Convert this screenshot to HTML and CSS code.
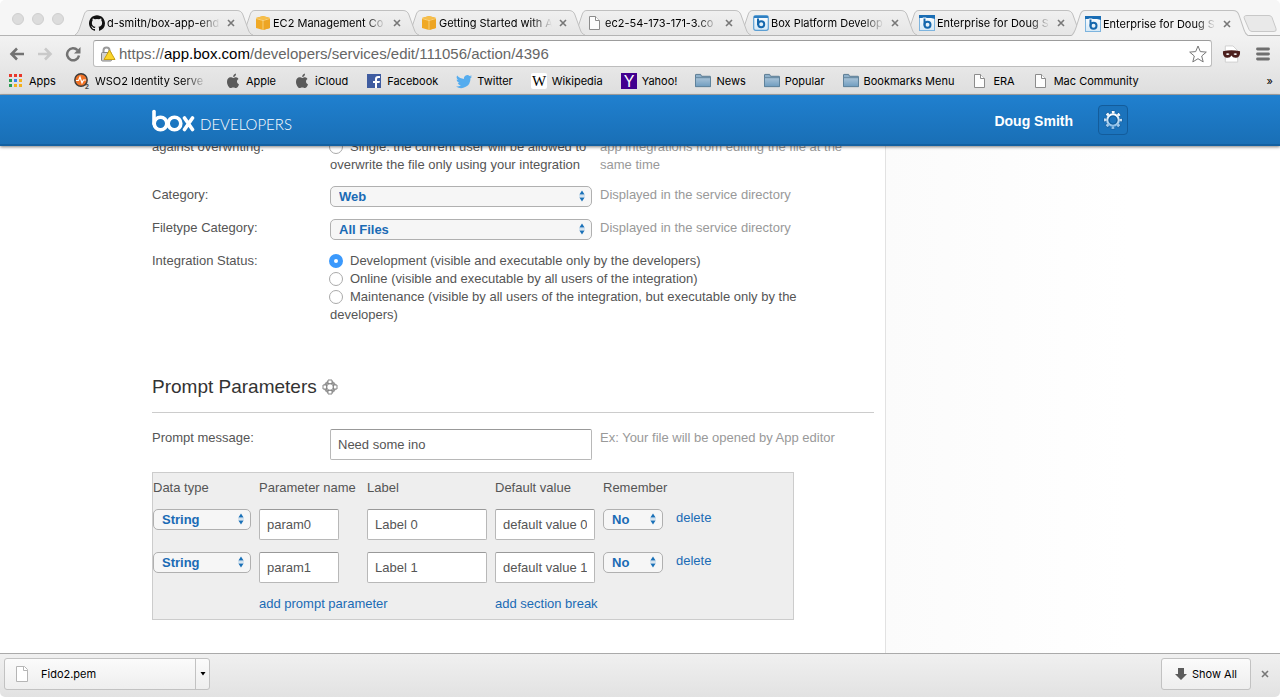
FILE: index.html
```
<!DOCTYPE html>
<html lang="en">
<head>
<meta charset="utf-8">
<title>Enterprise for Doug Smith</title>
<link rel="stylesheet" href="styles.css">
</head>
<body>
<svg class="sprites" aria-hidden="true">
  <defs>
    <linearGradient id="tab-fill" x1="0" y1="0" x2="0" y2="1"><stop offset="0" stop-color="#f0f0f0"/><stop offset="1" stop-color="#e6e6e6"/></linearGradient>
    <linearGradient id="folder-fill" x1="0" y1="0" x2="0" y2="1"><stop offset="0" stop-color="#a9c3d8"/><stop offset="1" stop-color="#6f9cbf"/></linearGradient>
    <linearGradient id="box-fill" x1="0" y1="0" x2="0" y2="1"><stop offset="0" stop-color="#fff"/><stop offset="1" stop-color="#d4e8f6"/></linearGradient>
    <linearGradient id="gear-fill" x1="0" y1="0" x2="0" y2="1"><stop offset="0" stop-color="#fff"/><stop offset="1" stop-color="#8fc0e8"/></linearGradient>
  </defs>
  <symbol id="tab-shape" viewBox="0 0 178 25" preserveAspectRatio="none">
    <path d="M0 25 C3 23 4 20 5 17 L9 5 C10 2 11 .5 14 .5 H162 C165 .5 167 2 168 5 L173 19 C174 22 175 24 178 25Z" fill="url(#tab-fill)"/>
    <path d="M0 25 C3 23 4 20 5 17 L9 5 C10 2 11 .5 14 .5 H162 C165 .5 167 2 168 5 L173 19 C174 22 175 24 178 25" fill="none" stroke="#c0c0c0"/>
  </symbol>
  <symbol id="tab-shape-active" viewBox="0 0 178 25" preserveAspectRatio="none">
    <path d="M0 25 C3 23 4 20 5 17 L9 5 C10 2 11 .5 14 .5 H162 C165 .5 167 2 168 5 L173 19 C174 22 175 24 178 25Z" fill="#f2f2f2"/>
    <path d="M0 25 C3 23 4 20 5 17 L9 5 C10 2 11 .5 14 .5 H162 C165 .5 167 2 168 5 L173 19 C174 22 175 24 178 25" fill="none" stroke="#c0c0c0"/>
  </symbol>
  <symbol id="github" viewBox="0 0 16 16">
    <path fill="#111" d="M8 .2C3.6.2 0 3.8 0 8.200c0 3.500 2.300 6.500 5.500 7.600.4.100.5-.2.5-.4v-1.400c-2.200.5-2.700-1-2.700-1-.4-.9-.9-1.200-.9-1.200-.7-.5.1-.5.1-.5.800.1 1.200.8 1.200.8.7 1.200 1.900.9 2.300.7.100-.5.3-.9.500-1.100C4.700 11.500 2.900 10.800 2.900 7.700c0-.9.3-1.600.8-2.100-.1-.2-.4-1 .1-2.100 0 0 .7-.2 2.200.8a7.500 7.500 0 0 1 4 0c1.500-1 2.200-.8 2.200-.8.4 1.100.2 1.900.1 2.100.5.600.8 1.300.8 2.100 0 3.100-1.900 3.800-3.700 4 .3.200.6.700.6 1.500v2.200c0 .2.100.5.600.4A8 8 0 0 0 16 8.200C16 3.800 12.400.2 8 .2z"/>
  </symbol>
  <symbol id="aws" viewBox="0 0 16 16">
    <path fill="#f0a925" d="M1 3l7-2 7 2v10l-7 2-7-2z"/><path fill="#f6be4a" d="M1 3l7-2 7 2-7 2z"/><path fill="#eda524" d="M8 5l7-2v10l-7 2z"/><path stroke="#fbdf9c" stroke-width=".7" fill="none" d="M8 5v10M1 3.500l7 2 7-2"/>
  </symbol>
  <symbol id="page" viewBox="0 0 16 16">
    <path fill="#fdfdfd" stroke="#8c8c8c" d="M2.500 1.500h6l4 4v9h-10z"/><path fill="#fff" stroke="#8c8c8c" d="M8.500 1.500v4h4"/>
  </symbol>
  <symbol id="box-icon" viewBox="0 0 16 16">
    <rect x=".5" y=".5" width="15" height="15" fill="url(#box-fill)" stroke="#7db4de"/><path d="M0 0h16v4l-4-1H0z" fill="#1a6db4"/><path d="M5.500 2.500v7.500" stroke="#fff" stroke-width="3.600"/><path d="M5.500 3.500v7" stroke="#1668ad" stroke-width="2"/><circle cx="8.500" cy="9.800" r="3" fill="none" stroke="#1668ad" stroke-width="2"/>
  </symbol>
  <symbol id="box-icon-plain" viewBox="0 0 16 16">
    <rect x=".7" y=".7" width="14.600" height="14.600" rx="2" fill="url(#box-fill)" stroke="#5c9fd3" stroke-width="1.200"/><path d="M1 1h14v2H1z" fill="#2e7fc2"/><path d="M5 3.500v6.500" stroke="#1668ad" stroke-width="2"/><circle cx="8.200" cy="9.200" r="3" fill="none" stroke="#1668ad" stroke-width="2"/>
  </symbol>
  <symbol id="close" viewBox="0 0 10 10"><path d="M2 2l6 6M8 2l-6 6" stroke="#777" stroke-width="1.600" fill="none"/></symbol>
  <symbol id="apple" viewBox="0 0 16 16">
    <path fill="#5a5a5a" d="M11.200 4.200c-1.300 0-1.900.7-2.800.7s-1.700-.7-2.900-.7C3.700 4.200 2 5.800 2 8.700c0 3 2 6.300 3.600 6.300 1 0 1.400-.6 2.700-.6s1.600.6 2.600.6c1.300 0 2.500-1.900 3.100-3.600-1.200-.5-2-1.500-2-2.800 0-1.100.6-2 1.500-2.600-.6-1.100-1.400-1.800-2.300-1.800zM8.200 4.100C8 2.300 9.300.8 11 .5c.2 1.800-1.100 3.500-2.800 3.600z"/>
  </symbol>
  <symbol id="folder" viewBox="0 0 17 16">
    <path fill="#8fb1cb" stroke="#56788f" d="M.5 13.500v-12q0-.5.500-.5h5l1 2h9q.5 0 .5.500v10z"/><path fill="url(#folder-fill)" stroke="#5e819a" d="M.5 4.500h16v9.500H.5z"/>
  </symbol>
  <symbol id="arrows" viewBox="0 0 8 12">
    <path fill="#1a71b8" d="M4 .5l2.600 4H1.400zM4 11.500l2.600-4H1.400z"/><path d="M1 5.500h6M1 6.700h6" stroke="#a9cae6" stroke-width=".5"/>
  </symbol>
</svg>

<div class="window">
  <nav class="tabs" aria-label="Tabs">
    <div class="lights"><span class="light"></span><span class="light"></span><span class="light"></span></div>
    <div class="tab t1"><svg class="shape"><use href="#tab-shape"/></svg><svg class="icon"><use href="#github"/></svg><span class="title">d-smith/box-app-end</span><button class="close" aria-label="Close tab"><svg><use href="#close"/></svg></button></div>
    <div class="tab t2"><svg class="shape"><use href="#tab-shape"/></svg><svg class="icon"><use href="#aws"/></svg><span class="title">EC2 Management Co</span><button class="close" aria-label="Close tab"><svg><use href="#close"/></svg></button></div>
    <div class="tab t3"><svg class="shape"><use href="#tab-shape"/></svg><svg class="icon"><use href="#aws"/></svg><span class="title">Getting Started with A</span><button class="close" aria-label="Close tab"><svg><use href="#close"/></svg></button></div>
    <div class="tab t4"><svg class="shape"><use href="#tab-shape"/></svg><svg class="icon"><use href="#page"/></svg><span class="title">ec2-54-173-171-3.co</span><button class="close" aria-label="Close tab"><svg><use href="#close"/></svg></button></div>
    <div class="tab t5"><svg class="shape"><use href="#tab-shape"/></svg><svg class="icon"><use href="#box-icon-plain"/></svg><span class="title">Box Platform Develop</span><button class="close" aria-label="Close tab"><svg><use href="#close"/></svg></button></div>
    <div class="tab t6"><svg class="shape"><use href="#tab-shape"/></svg><svg class="icon"><use href="#box-icon"/></svg><span class="title">Enterprise for Doug S</span><button class="close" aria-label="Close tab"><svg><use href="#close"/></svg></button></div>
    <div class="tab active"><svg class="shape"><use href="#tab-shape-active"/></svg><svg class="icon"><use href="#box-icon"/></svg><span class="title">Enterprise for Doug S</span><button class="close" aria-label="Close tab"><svg><use href="#close"/></svg></button></div>
    <button class="new-tab" aria-label="New tab"><svg viewBox="0 0 34 17"><path d="M4 .5h22q2 0 3 2l4 11q1 3-2 3H9q-2 0-3-2L1.500 4Q0 .5 4 .5z" fill="#e9e9e9" stroke="#c8c8c8"/></svg></button>
  </nav>

  <div class="chrome">
    <div class="toolbar">
      <button class="nav" aria-label="Back"><svg viewBox="0 0 16 16"><path d="M8 2.500L2.500 8 8 13.500M3 8h12" fill="none" stroke="#737373" stroke-width="2.600"/></svg></button>
      <button class="nav" aria-label="Forward"><svg viewBox="0 0 16 16"><path d="M8 2.500L13.500 8 8 13.500M13 8H1" fill="none" stroke="#c9c9c9" stroke-width="2.600"/></svg></button>
      <button class="nav" aria-label="Reload"><svg viewBox="0 0 16 16"><path d="M12.500 4.200A6 6 0 1 0 14 9.500" fill="none" stroke="#737373" stroke-width="2.500"/><path d="M15.500 1v6.500H9z" fill="#737373"/></svg></button>
      <div class="address">
        <svg class="lock" viewBox="0 0 16 16"><path d="M3.500 7V4.500a3 3 0 0 1 6 0V7" fill="none" stroke="#9a9a9a" stroke-width="2"/><rect x="1.500" y="6.500" width="10" height="8.500" rx="1" fill="#d2d2d2" stroke="#858585"/><path d="M9.500 4l5.500 9.500H4z" fill="#fbd52a" stroke="#caa10e" stroke-linejoin="round"/></svg>
        <span class="url">https://<span class="host">app.box.com</span>/developers/services/edit/111056/action/4396</span>
        <button class="star" aria-label="Bookmark this page"><svg viewBox="0 0 18 18"><path d="M9 1l2.300 5.600 6 .5-4.600 3.900 1.500 5.900L9 13.700l-5.200 3.200 1.500-5.900L.7 7.100l6-.5z" fill="#fff" stroke="#777"/></svg></button>
      </div>
      <button class="ext" aria-label="Mask extension"><svg viewBox="0 0 20 18"><path d="M3.500.5h8l5 5v12h-13z" fill="#fff" stroke="#d0d0d0"/><path d="M1 6q9-2 18 0 .5 6-4 7-3.500.5-5-2.500Q8.500 13.500 5 13 .5 12 1 6z" fill="#4b1f1d"/><path d="M4 9q2-1.500 4 0-2 2-4 0zM12 9q2-1.500 4 0-2 2-4 0z" fill="#fff"/></svg></button>
      <button class="menu" aria-label="Menu"><svg viewBox="0 0 14 14"><path d="M1.500 2h11M1.500 7h11M1.500 12h11" stroke="#6f6f6f" stroke-width="2.800" stroke-linecap="round"/></svg></button>
    </div>
    <nav class="bookmarks" aria-label="Bookmarks">
      <a href="#"><svg viewBox="-1 -1 16 16"><path fill="#e8372c" d="M0 0h3v3H0zM5 0h3v3H5zM10 0h3v3h-3z"/><path fill="#2a9d52" d="M0 5h3v3H0zM0 10h3v3H0z"/><path fill="#3a82ee" d="M5 5h3v3H5z"/><path fill="#f3b01c" d="M10 5h3v3h-3zM5 10h3v3H5zM10 10h3v3h-3z"/></svg>Apps</a>
      <a href="#"><svg viewBox="0 0 16 16"><circle cx="7" cy="7" r="6.200" fill="#ef7226" stroke="#3b3b3b" stroke-width="1.400"/><path d="M2 7.500h2.500L6 4l2 6 1.500-3H12" fill="none" stroke="#fff" stroke-width="1.200"/><text x="11" y="16" class="mark-two">2</text></svg><span class="faded">WSO2 Identity Serve</span></a>
      <a href="#"><svg><use href="#apple"/></svg>Apple</a>
      <a href="#"><svg><use href="#apple"/></svg>iCloud</a>
      <a href="#"><svg viewBox="-1 -1 16 16"><path fill="#3f5ca0" d="M0 0h14v14H0z"/><path fill="#fff" d="M8 14V9H6V7h2V5q0-3 3-3h2v2h-1.500Q10 4 10 5.200V7h3l-.5 2H10v5z"/></svg>Facebook</a>
      <a href="#"><svg viewBox="0 0 16 16"><path fill="#55acee" d="M16 3.500a6 6 0 0 1-1.800.5 3 3 0 0 0 1.400-1.800 6 6 0 0 1-2 .8 3.300 3.300 0 0 0-5.600 3A9.300 9.300 0 0 1 1.200 2.600a3.300 3.300 0 0 0 1 4.400 3 3 0 0 1-1.500-.4c0 1.600 1.100 2.900 2.600 3.200a3 3 0 0 1-1.500.1 3.300 3.300 0 0 0 3.100 2.300A6.600 6.600 0 0 1 0 13.500 9.300 9.300 0 0 0 14.400 5.200 6 6 0 0 0 16 3.500z"/></svg>Twitter</a>
      <a href="#"><svg viewBox="0 0 16 16"><rect width="16" height="16" rx="2" fill="#fff"/><text x="8" y="13" class="mark-w">W</text></svg>Wikipedia</a>
      <a href="#"><svg viewBox="0 0 16 16"><path fill="#42008f" d="M0 0h16v16H0z"/><text x="8" y="14" class="mark-y">Y</text></svg>Yahoo!</a>
      <a href="#"><svg><use href="#folder"/></svg>News</a>
      <a href="#"><svg><use href="#folder"/></svg>Popular</a>
      <a href="#"><svg><use href="#folder"/></svg>Bookmarks Menu</a>
      <a href="#"><svg class="narrow"><use href="#page"/></svg>ERA</a>
      <a href="#"><svg class="narrow"><use href="#page"/></svg>Mac Community</a>
      <button class="more" aria-label="More bookmarks">»</button>
    </nav>
  </div>

  <header class="site-header">
    <div class="site-inner">
      <a class="brand" href="#"><svg class="logo" viewBox="0 0 43 23" role="img" aria-label="box"><g fill="none" stroke="#fff" stroke-width="3.600" stroke-linecap="round"><path d="M2 2.500v12.500"/><circle cx="8.500" cy="14.500" r="6.300"/><circle cx="22.500" cy="14.500" r="6.300"/><path d="M32.500 9l8 11.500M40.500 9l-8 11.500"/></g></svg><span class="brand-sub">DEVELOPERS</span></a>
      <a class="user" href="#">Doug Smith</a>
      <button class="gear" aria-label="Settings"><svg viewBox="0 0 20 20"><g fill="none"><circle cx="10" cy="10" r="7.800" stroke="#125c9d" stroke-width="3.600" stroke-dasharray="3.860 2.266" stroke-dashoffset="1.930"/><circle cx="10" cy="10" r="7.800" stroke="url(#gear-fill)" stroke-width="2.400" stroke-dasharray="2.860 3.266" stroke-dashoffset="1.430"/><circle cx="10" cy="10" r="5.600" stroke="url(#gear-fill)" stroke-width="2.400"/><circle cx="10" cy="10" r="4" stroke="#0f5a98" stroke-width="1.200"/></g></svg></button>
    </div>
  </header>

  <main class="viewport">
    <div class="layout">
      <form class="content">
        <div class="row first">
          <span class="label">against overwriting:</span>
          <div class="field"><label><input type="radio" name="lock" class="radio">Single: the current user will be allowed to overwrite the file only using your integration</label></div>
          <p class="hint">app integrations from editing the file at the same time</p>
        </div>
        <div class="row">
          <label class="label" for="category">Category:</label>
          <div class="select"><select id="category"><option>Web</option></select><svg><use href="#arrows"/></svg></div>
          <p class="hint">Displayed in the service directory</p>
        </div>
        <div class="row">
          <label class="label" for="filetype">Filetype Category:</label>
          <div class="select"><select id="filetype"><option>All Files</option></select><svg><use href="#arrows"/></svg></div>
          <p class="hint">Displayed in the service directory</p>
        </div>
        <div class="row">
          <span class="label">Integration Status:</span>
          <div class="field wide">
            <label><input type="radio" name="status" class="radio" checked>Development (visible and executable only by the developers)</label>
            <label><input type="radio" name="status" class="radio">Online (visible and executable by all users of the integration)</label>
            <label><input type="radio" name="status" class="radio">Maintenance (visible by all users of the integration, but executable only by the developers)</label>
          </div>
        </div>
        <h2 class="heading">Prompt Parameters <svg viewBox="0 0 16 16"><circle cx="8" cy="8" r="4.800" fill="none" stroke="#9a9a9a" stroke-width="3.200"/><path d="M6 1h4v3.500H6zM6 11.500h4V15H6zM1 6h3.500v4H1zM11.500 6H15v4h-3.500z" fill="#fff" stroke="#858585"/><circle cx="8" cy="8" r="3.200" fill="#fff" stroke="#858585" stroke-width=".8"/></svg></h2>
        <div class="row">
          <label class="label" for="message">Prompt message:</label>
          <input class="text" id="message" type="text" value="Need some ino">
          <p class="hint">Ex: Your file will be opened by App editor</p>
        </div>
        <table class="params">
          <colgroup><col class="c-type"><col class="c-name"><col class="c-label"><col class="c-name"><col class="c-remember"><col></colgroup>
          <thead><tr><th>Data type</th><th>Parameter name</th><th>Label</th><th>Default value</th><th>Remember</th><th></th></tr></thead>
          <tbody>
            <tr>
              <td><div class="select"><select aria-label="Data type"><option>String</option></select><svg><use href="#arrows"/></svg></div></td>
              <td><input class="text short" type="text" value="param0" aria-label="Parameter name"></td>
              <td><input class="text" type="text" value="Label 0" aria-label="Label"></td>
              <td><input class="text" type="text" value="default value 0" aria-label="Default value"></td>
              <td><div class="select remember"><select aria-label="Remember"><option>No</option></select><svg><use href="#arrows"/></svg></div></td>
              <td><a href="#">delete</a></td>
            </tr>
            <tr>
              <td><div class="select"><select aria-label="Data type"><option>String</option></select><svg><use href="#arrows"/></svg></div></td>
              <td><input class="text short" type="text" value="param1" aria-label="Parameter name"></td>
              <td><input class="text" type="text" value="Label 1" aria-label="Label"></td>
              <td><input class="text" type="text" value="default value 1" aria-label="Default value"></td>
              <td><div class="select remember"><select aria-label="Remember"><option>No</option></select><svg><use href="#arrows"/></svg></div></td>
              <td><a href="#">delete</a></td>
            </tr>
            <tr><td></td><td colspan="2"><a href="#">add prompt parameter</a></td><td colspan="3"><a href="#">add section break</a></td></tr>
          </tbody>
        </table>
      </form>
      <aside class="side"></aside>
    </div>
  </main>

  <footer class="shelf">
    <div class="download">
      <button class="file"><svg viewBox="0 0 16 16"><path fill="#fff" stroke="#b5b5b5" d="M2.500.5h8l3 3v12h-11z"/><path fill="#fff" stroke="#b5b5b5" d="M9.500.5v4h4"/></svg>Fido2.pem</button>
      <button class="caret" aria-label="Download options"><svg viewBox="0 0 6 4"><path d="M.5 0h5L3 3.500z"/></svg></button>
    </div>
    <button class="show-all"><svg viewBox="0 0 12 12"><path d="M3 0h6v6h3l-6 6-6-6h3z" fill="#5c5c5c"/></svg>Show All</button>
    <button class="close" aria-label="Close downloads"><svg><use href="#close"/></svg></button>
  </footer>
</div>
</body>
</html>
```
FILE: styles.css
```
* { box-sizing: border-box; }
body { margin: 0; background: #fff; color: #555; font: 13px/18px "Liberation Sans", Arial, sans-serif; }
button { margin: 0; padding: 0; border: 0; background: none; font: inherit; color: inherit; }
a { color: #1a6bb5; text-decoration: none; }
p, h2 { margin: 0; }
svg { display: block; flex: none; }
.sprites { position: absolute; width: 0; height: 0; }

.window { display: flex; flex-direction: column; height: 100vh; overflow: hidden; border-radius: 5px; }

/* Tab strip */
.tabs { display: flex; align-items: flex-end; height: 36px; flex: none; padding-right: 3px; background: #f6f6f6; border-bottom: 1px solid #b4b4b4; color: #000; font: 11px/16px Inter, sans-serif; }
.lights { display: flex; gap: 8px; flex: none; width: 75px; padding: 0 0 10px 12px; }
.light { width: 12px; height: 12px; border-radius: 50%; background: #dcdcdc; border: 1px solid #cfcfcf; }
.tab { position: relative; display: flex; align-items: center; flex: 1 1 0; min-width: 0; max-width: 178px; height: 25px; margin-right: -12px; padding: 1px 17px 0 14px; }
.t1 { z-index: 6; } .t2 { z-index: 5; } .t3 { z-index: 4; } .t4 { z-index: 3; } .t5 { z-index: 2; } .t6 { z-index: 1; }
.tab.active { z-index: 7; height: 26px; margin-bottom: -1px; }
.shape { position: absolute; inset: 0; width: 100%; height: 100%; z-index: -1; }
.icon { width: 16px; height: 16px; margin-right: 2px; }
.title { flex: 1; overflow: hidden; white-space: nowrap; -webkit-mask-image: linear-gradient(to right, #000 82%, transparent); mask-image: linear-gradient(to right, #000 82%, transparent); }
.close { flex: none; margin-left: 6px; }
.close svg { width: 10px; height: 10px; }
.new-tab { flex: none; margin: 0 0 3px 6px; }
.new-tab svg { width: 34px; height: 17px; }

/* Toolbar and bookmarks */
.chrome { flex: none; background: linear-gradient(#f2f2f2, #dedede); border-bottom: 1px solid #a8a8a8; color: #000; }
.toolbar { display: flex; align-items: center; height: 33px; padding: 2px 10px 0 9px; }
.nav { margin-right: 12px; }
.nav svg { width: 16px; height: 16px; }
.address { display: flex; align-items: center; flex: 1; height: 27px; margin-right: 10px; padding: 0 4px 0 6px; background: #fff; border: 1px solid #bdbdbd; border-top-color: #9c9c9c; border-radius: 3px; font-size: 15px; color: #666; }
.lock { width: 16px; height: 16px; margin-right: 3px; }
.url { flex: 1; white-space: nowrap; overflow: hidden; }
.host { color: #000; }
.star svg { width: 18px; height: 18px; }
.ext { margin-right: 15px; }
.ext svg { width: 19px; height: 18px; }
.menu svg { width: 14px; height: 14px; }
.bookmarks { display: flex; align-items: center; gap: 18px; height: 25px; padding: 0 7px 1px 8px; font: 11px/16px Inter, sans-serif; white-space: nowrap; }
.bookmarks a { display: flex; align-items: center; gap: 5px; color: #000; }
.bookmarks svg { width: 16px; height: 16px; }
.faded { width: 112px; overflow: hidden; -webkit-mask-image: linear-gradient(to right, #000 80%, transparent); mask-image: linear-gradient(to right, #000 80%, transparent); }
.more { margin-left: auto; }
.mark-two { font: bold 7px "Liberation Sans", sans-serif; fill: #444; }
.mark-w { font: 15px "Liberation Serif", serif; text-anchor: middle; }
.mark-y { font: 16px "Liberation Sans", sans-serif; fill: #fff; text-anchor: middle; }

/* Site header */
.site-header { position: relative; z-index: 1; flex: none; background: linear-gradient(#2080cf, #196fb6); border-bottom: 2px solid #1260a1; box-shadow: 0 1px 3px rgba(0, 0, 0, .5); }
.site-inner { display: flex; align-items: center; max-width: 976px; height: 49px; margin: 0 auto; }
.brand { display: flex; align-items: flex-end; margin-right: auto; padding-top: 1px; }
.logo { width: 43px; height: 23px; margin-right: 5px; }
.brand-sub { color: #fff; font: 300 15px/16px Lato, sans-serif; }
.user { margin-right: 25px; padding-top: 2px; color: #fff; font-size: 14px; font-weight: bold; }
.gear { padding: 4px; background: #1b73bc; border: 1px solid #135c9b; border-radius: 4px; }
.gear svg { width: 20px; height: 20px; }

/* Page */
.viewport { flex: 1; min-height: 0; overflow: hidden; }
.layout { display: flex; max-width: 976px; height: 100%; margin: 0 auto; }
.content { flex: none; width: 734px; padding-right: 11px; border-right: 1px solid #e2e2e2; }
.side { flex: 1; background: linear-gradient(to right, #fbfbfb, #fff); }
.row { display: grid; grid-template-columns: 170px 262px 1fr; column-gap: 8px; align-items: start; margin-bottom: 12px; }
.first { margin-top: -8px; }
.hint { color: #999; }
.field label { display: block; }
.wide { grid-column: 2 / 4; max-width: 500px; }
.radio { appearance: none; width: 14px; height: 14px; margin: 0 7px 0 -1px; vertical-align: -3px; background: #fff; border: 1px solid #aaa; border-radius: 50%; }
.radio:checked { background: #fff; border: 5px solid #3b99fc; }
.select { position: relative; }
.select select { display: block; appearance: none; width: 100%; height: 21px; padding: 0 16px 0 8px; background: #f6f6f6; border: 1px solid #b0b0b0; border-radius: 5px; color: #1a6bb5; font: bold 13px/18px "Liberation Sans", Arial, sans-serif; }
.select svg { position: absolute; top: 4px; right: 6px; width: 8px; height: 12px; pointer-events: none; }
.text { display: block; width: 100%; height: 31px; padding: 0 7px; background: #fff; border: 1px solid #b8b8b8; border-top-color: #999; border-radius: 2px; color: #555; font: inherit; }
.heading { display: flex; align-items: center; gap: 5px; margin: 51px 0 16px; padding-bottom: 13px; border-bottom: 1px solid #ccc; color: #333; font-size: 19px; font-weight: normal; line-height: 24px; }
.heading svg { width: 16px; height: 16px; }
.params { table-layout: fixed; width: 642px; border: 1px solid #ccc; background: #eee; border-spacing: 0; }
.params th, .params td { padding: 12px 8px 0 0; text-align: left; vertical-align: top; font-weight: normal; white-space: nowrap; }
.params th { padding: 6px 0 0; }
.params tr:last-child td { padding-bottom: 6px; }
.c-type { width: 106px; } .c-name { width: 108px; } .c-label { width: 128px; } .c-remember { width: 73px; }
.params thead tr:last-child th { padding-bottom: 0; }
.short { width: 80px; }
.remember { width: 60px; }

/* Download shelf */
.shelf { display: flex; align-items: center; flex: none; height: 44px; padding: 0 10px 3px 4px; background: linear-gradient(#f0f0f0, #e2e2e2); border-top: 1px solid #aaa; color: #000; font: 11px/16px Inter, sans-serif; }
.download { display: flex; width: 206px; height: 32px; margin-right: auto; background: linear-gradient(#fbfbfb, #eee); border: 1px solid #c2c2c2; border-radius: 3px; }
.file { display: flex; align-items: center; flex: 1; padding-left: 9px; gap: 11px; }
.file svg { width: 16px; height: 16px; }
.caret { display: flex; align-items: center; justify-content: center; width: 14px; border-left: 1px solid #c2c2c2; }
.caret svg { width: 6px; height: 4px; }
.show-all { display: flex; align-items: center; gap: 5px; height: 32px; padding: 0 13px; background: linear-gradient(#fbfbfb, #eee); border: 1px solid #c2c2c2; border-radius: 3px; }
.show-all svg { width: 12px; height: 12px; }
.shelf .close { margin-left: 9px; }
```
